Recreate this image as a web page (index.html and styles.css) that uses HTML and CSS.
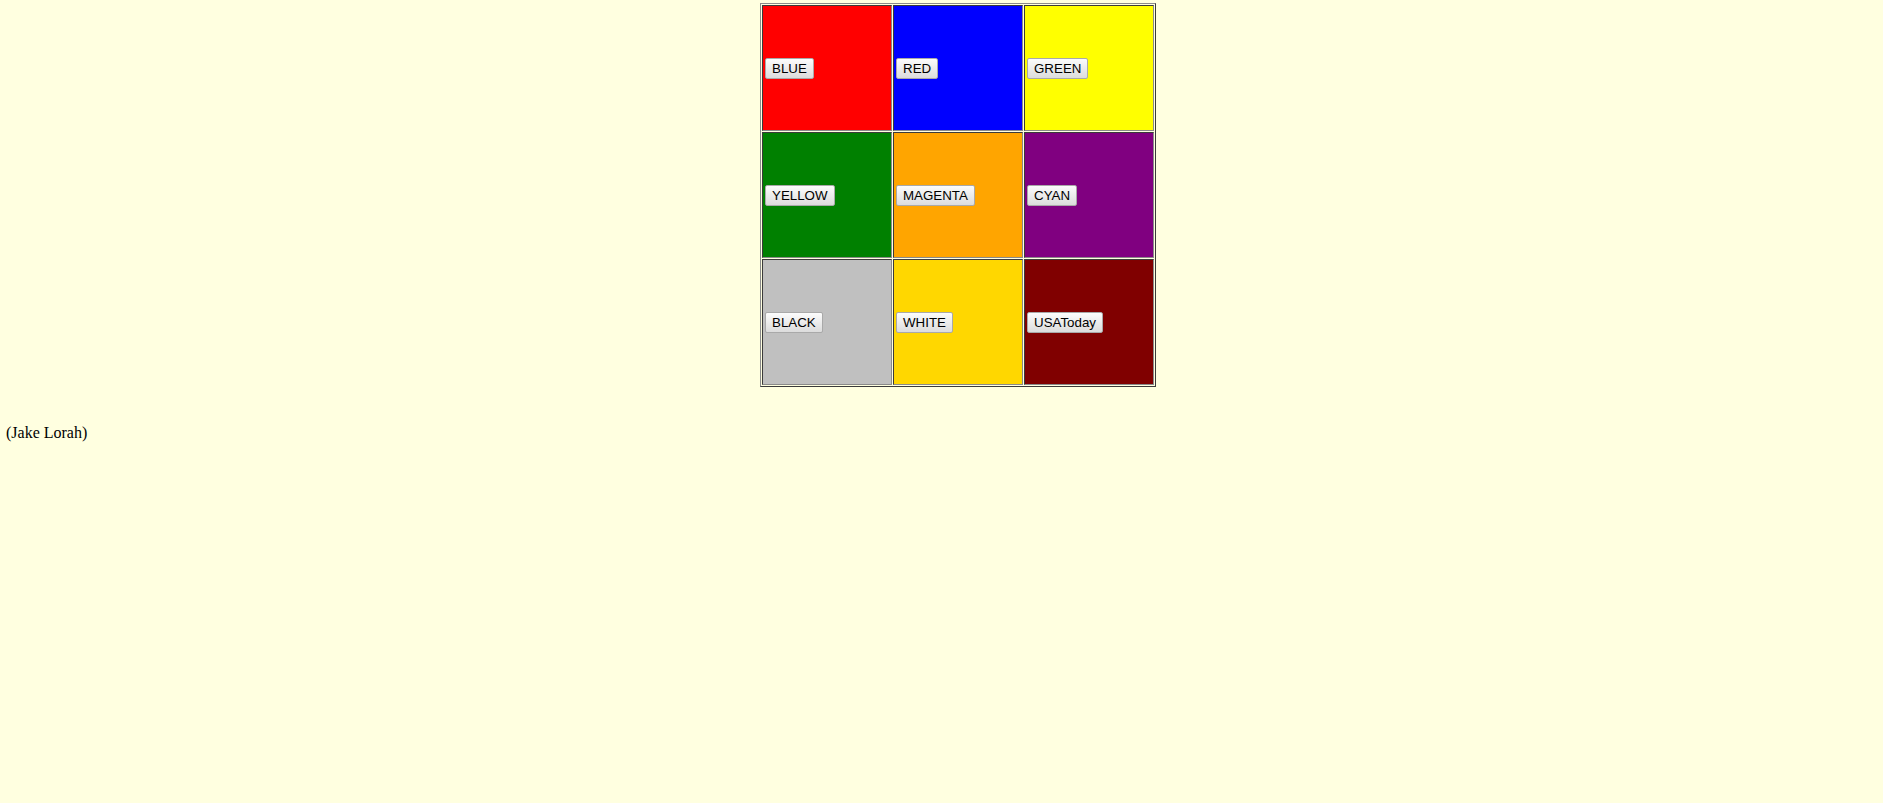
FILE: index.html
```html
<!DOCTYPE html>
<html>
<head>
<meta charset="utf-8">
<title>Colors</title>
<link rel="stylesheet" href="styles.css">
</head>
<body>
<div class="page">
  <table class="grid">
    <tr>
      <td class="c-red"><button class="btn">BLUE</button></td>
      <td class="c-blue"><button class="btn">RED</button></td>
      <td class="c-yellow"><button class="btn">GREEN</button></td>
    </tr>
    <tr>
      <td class="c-green"><button class="btn">YELLOW</button></td>
      <td class="c-orange"><button class="btn">MAGENTA</button></td>
      <td class="c-purple"><button class="btn">CYAN</button></td>
    </tr>
    <tr>
      <td class="c-silver"><button class="btn">BLACK</button></td>
      <td class="c-gold"><button class="btn">WHITE</button></td>
      <td class="c-maroon"><button class="btn">USAToday</button></td>
    </tr>
  </table>
  <p class="author">(Jake Lorah)</p>
</div>
</body>
</html>
```

FILE: styles.css
```css
html, body {
  margin: 0;
  padding: 0;
  background: #ffffe0;
}

.page {
  padding: 3px 0 0 6px;
  font-family: "Liberation Serif", "Times New Roman", serif;
  font-size: 16px;
  color: #000;
}

.grid {
  margin-left: 754px;
  border-collapse: separate;
  border-spacing: 1px;
  border-style: solid;
  border-width: 1px;
  border-color: #8a8a8a #3a3a3a #3a3a3a #8a8a8a;
}

.grid td {
  width: 126px;
  height: 122px;
  padding: 1px;
  border-style: solid;
  border-width: 1px;
  border-color: #3a3a3a #8a8a8a #8a8a8a #3a3a3a;
  vertical-align: middle;
  box-sizing: content-box;
}

.c-red { background: #ff0000; }
.c-blue { background: #0000ff; }
.c-yellow { background: #ffff00; }
.c-green { background: #008000; }
.c-orange { background: #ffa500; }
.c-purple { background: #800080; }
.c-silver { background: #c0c0c0; }
.c-gold { background: #ffd700; }
.c-maroon { background: #800000; }

.btn {
  margin: 0 0 0 1px;
  padding: 1px 6px;
  height: 21px;
  font-family: "Liberation Sans", Arial, sans-serif;
  font-size: 13.333px;
  color: #000;
  background: linear-gradient(#fcfcfc, #dcdcdc);
  border: 1px solid #a9a9a9;
  border-radius: 2px;
  line-height: 17px;
  box-sizing: border-box;
}

.author {
  margin: 37px 0 0 0;
}
```
